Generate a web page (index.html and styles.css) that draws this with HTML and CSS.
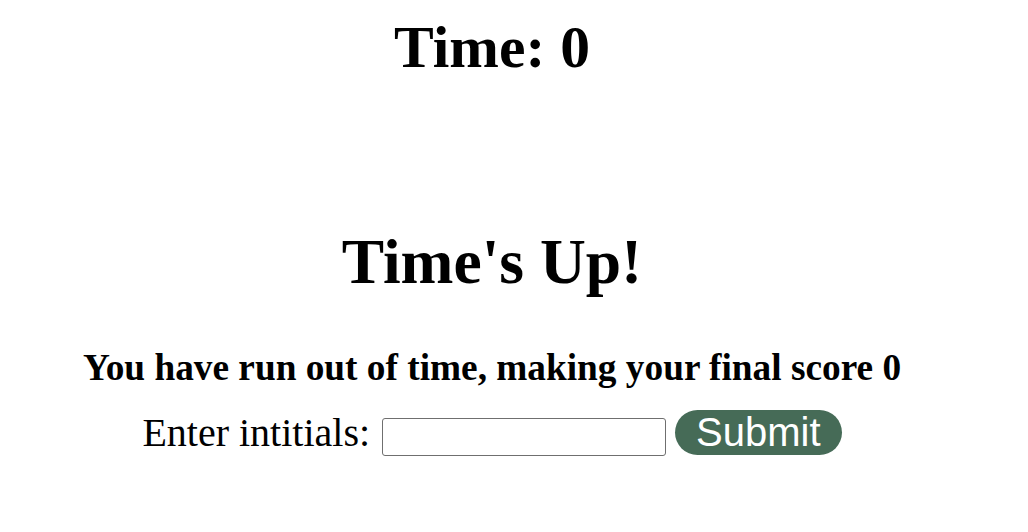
FILE: index.html
```html
<!DOCTYPE html>
<html>
<head>
<meta charset="utf-8">
<link rel="stylesheet" href="styles.css">
</head>
<body>
<div class="page">
  <h1 class="timer">Time: 0</h1>
  <h1 class="title">Time's Up!</h1>
  <p class="message">You have run out of time, making your final score 0</p>
  <form class="entry">
    <label class="entry-label" for="initials">Enter intitials:</label>
    <input class="entry-input" id="initials" type="text">
    <button class="entry-button" type="button">Submit</button>
  </form>
</div>
</body>
</html>
```
FILE: styles.css
```css
html, body {
  margin: 0;
  padding: 0;
  background: #ffffff;
}
body {
  font-family: "Liberation Serif", "Times New Roman", serif;
  color: #000;
}
.page {
  width: 984px;
  display: flex;
  flex-direction: column;
  align-items: center;
  text-align: center;
}
.timer {
  margin: 18px 0 0;
  font-size: 59.6px;
  line-height: 1;
  font-weight: bold;
}
.title {
  margin: 152px 0 0;
  font-size: 63.5px;
  line-height: 1;
  font-weight: bold;
}
.message {
  margin: 56px 0 0;
  font-size: 37.3px;
  line-height: 1;
  font-weight: bold;
}
.entry {
  margin: 24px 0 0;
  display: flex;
  align-items: flex-start;
  justify-content: center;
}
.entry-label {
  font-size: 40px;
  line-height: 1;
  margin-top: 3px;
}
.entry-input {
  box-sizing: border-box;
  width: 284px;
  height: 38px;
  margin: 8px 0 0 12px;
  border: 1px solid #6f6f6f;
  border-radius: 3px;
  padding: 0 4px;
  background: #fff;
  font-size: 16px;
}
.entry-button {
  box-sizing: border-box;
  height: 45px;
  margin-left: 9px;
  padding: 0 21px;
  border: none;
  border-radius: 23px;
  background: #466b57;
  color: #fff;
  font-family: "Liberation Sans", Arial, sans-serif;
  font-size: 40px;
  line-height: 45px;
}
```
